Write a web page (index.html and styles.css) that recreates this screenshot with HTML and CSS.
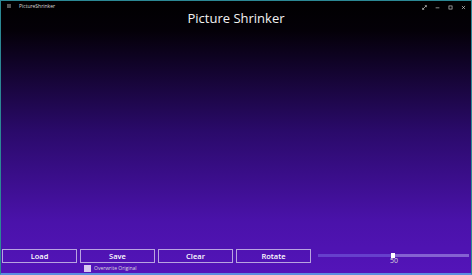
FILE: index.html
```html
<!DOCTYPE html>
<html>
<head>
<meta charset="utf-8">
<link rel="stylesheet" href="styles.css">
</head>
<body>
<div class="window">
  <div class="titlebar">
    <div class="app">
      <span class="app-icon"></span>
      <span class="app-name">PictureShrinker</span>
    </div>
    <div class="controls">
      <svg class="ctl" width="8" height="8" viewBox="0 0 8 8"><path d="M1 7 L7 1 M4.5 1 H7 V3.5 M1 4.5 V7 H3.5" stroke="#ddd" stroke-width="1" fill="none"/></svg>
      <svg class="ctl" width="8" height="8" viewBox="0 0 8 8"><path d="M1 4.5 H7" stroke="#ddd" stroke-width="1"/></svg>
      <svg class="ctl" width="8" height="8" viewBox="0 0 8 8"><rect x="1.5" y="1.5" width="5" height="5" stroke="#ddd" stroke-width="1" fill="none"/></svg>
      <svg class="ctl" width="8" height="8" viewBox="0 0 8 8"><path d="M1.5 1.5 L6.5 6.5 M6.5 1.5 L1.5 6.5" stroke="#ddd" stroke-width="1"/></svg>
    </div>
  </div>
  <div class="content">
    <h1 class="heading">Picture Shrinker</h1>
    <div class="spacer"></div>
    <div class="toolbar">
      <button class="btn">Load</button>
      <button class="btn">Save</button>
      <button class="btn">Clear</button>
      <button class="btn">Rotate</button>
      <div class="slider">
        <div class="track">
          <div class="fill"></div>
          <div class="thumb"></div>
          <div class="rest"></div>
        </div>
        <div class="value">50</div>
      </div>
    </div>
    <div class="options">
      <span class="check"></span>
      <span class="check-label">Overwrite Original</span>
    </div>
  </div>
</div>
</body>
</html>
```
FILE: styles.css
```css
* { box-sizing: border-box; }
html, body { margin: 0; padding: 0; }
body {
  width: 472px;
  height: 275px;
  overflow: hidden;
  font-family: "Open Sans", "Noto Sans", sans-serif;
}
.window {
  width: 472px;
  height: 275px;
  border: 1px solid #2b8894;
  border-bottom: 2px solid #5a8de0;
  background: linear-gradient(to bottom, #000000 0px, #040008 30px, #2a0a6a 130px, #4a12aa 220px, #5414ba 275px);
  display: flex;
  flex-direction: column;
  color: #fff;
}
.titlebar {
  height: 10px;
  display: flex;
  justify-content: space-between;
  align-items: center;
}
.app {
  display: flex;
  align-items: center;
  padding-left: 6px;
  gap: 8px;
}
.app-icon {
  width: 4px;
  height: 4px;
  background: #555;
}
.app-name {
  font-size: 5px;
  color: #ddd;
}
.controls {
  display: flex;
  align-items: center;
  padding-right: 5px;
  gap: 8px;
  padding-top: 2px;
}
.ctl { width: 5px; height: 5px; }
.content {
  flex: 1;
  display: flex;
  flex-direction: column;
}
.heading {
  margin: -1px 0 0 0;
  text-align: center;
  font-weight: 400;
  font-size: 13px;
  line-height: 16px;
  color: #f2f2f2;
}
.spacer { flex: 1; }
.toolbar {
  display: flex;
  align-items: center;
  gap: 3px;
  padding: 0 2px 0 1px;
  height: 14px;
}
.btn {
  width: 75px;
  height: 14px;
  border: 1px solid #b8a4e0;
  background: transparent;
  color: #fff;
  font-family: inherit;
  font-size: 7.5px;
  font-weight: 600;
  padding: 0;
  line-height: 12px;
}
.slider {
  flex: 1;
  position: relative;
  height: 14px;
  margin-left: 4px;
}
.track {
  position: absolute;
  left: 0;
  right: 0;
  top: 5px;
  height: 3px;
  display: flex;
  align-items: center;
}
.fill { width: 73px; height: 3px; background: #6640cc; }
.thumb { width: 4px; height: 5px; background: #fff; }
.rest { flex: 1; height: 3px; background: #8462d2; }
.value {
  position: absolute;
  left: 72px;
  top: 8px;
  font-size: 7px;
  line-height: 7px;
  color: #ddd;
}
.options {
  display: flex;
  align-items: center;
  gap: 3px;
  padding-left: 83px;
  height: 10px;
}
.check {
  width: 7px;
  height: 7px;
  background: #d8c8f0;
}
.check-label {
  font-size: 5px;
  color: #ddd;
}
```
